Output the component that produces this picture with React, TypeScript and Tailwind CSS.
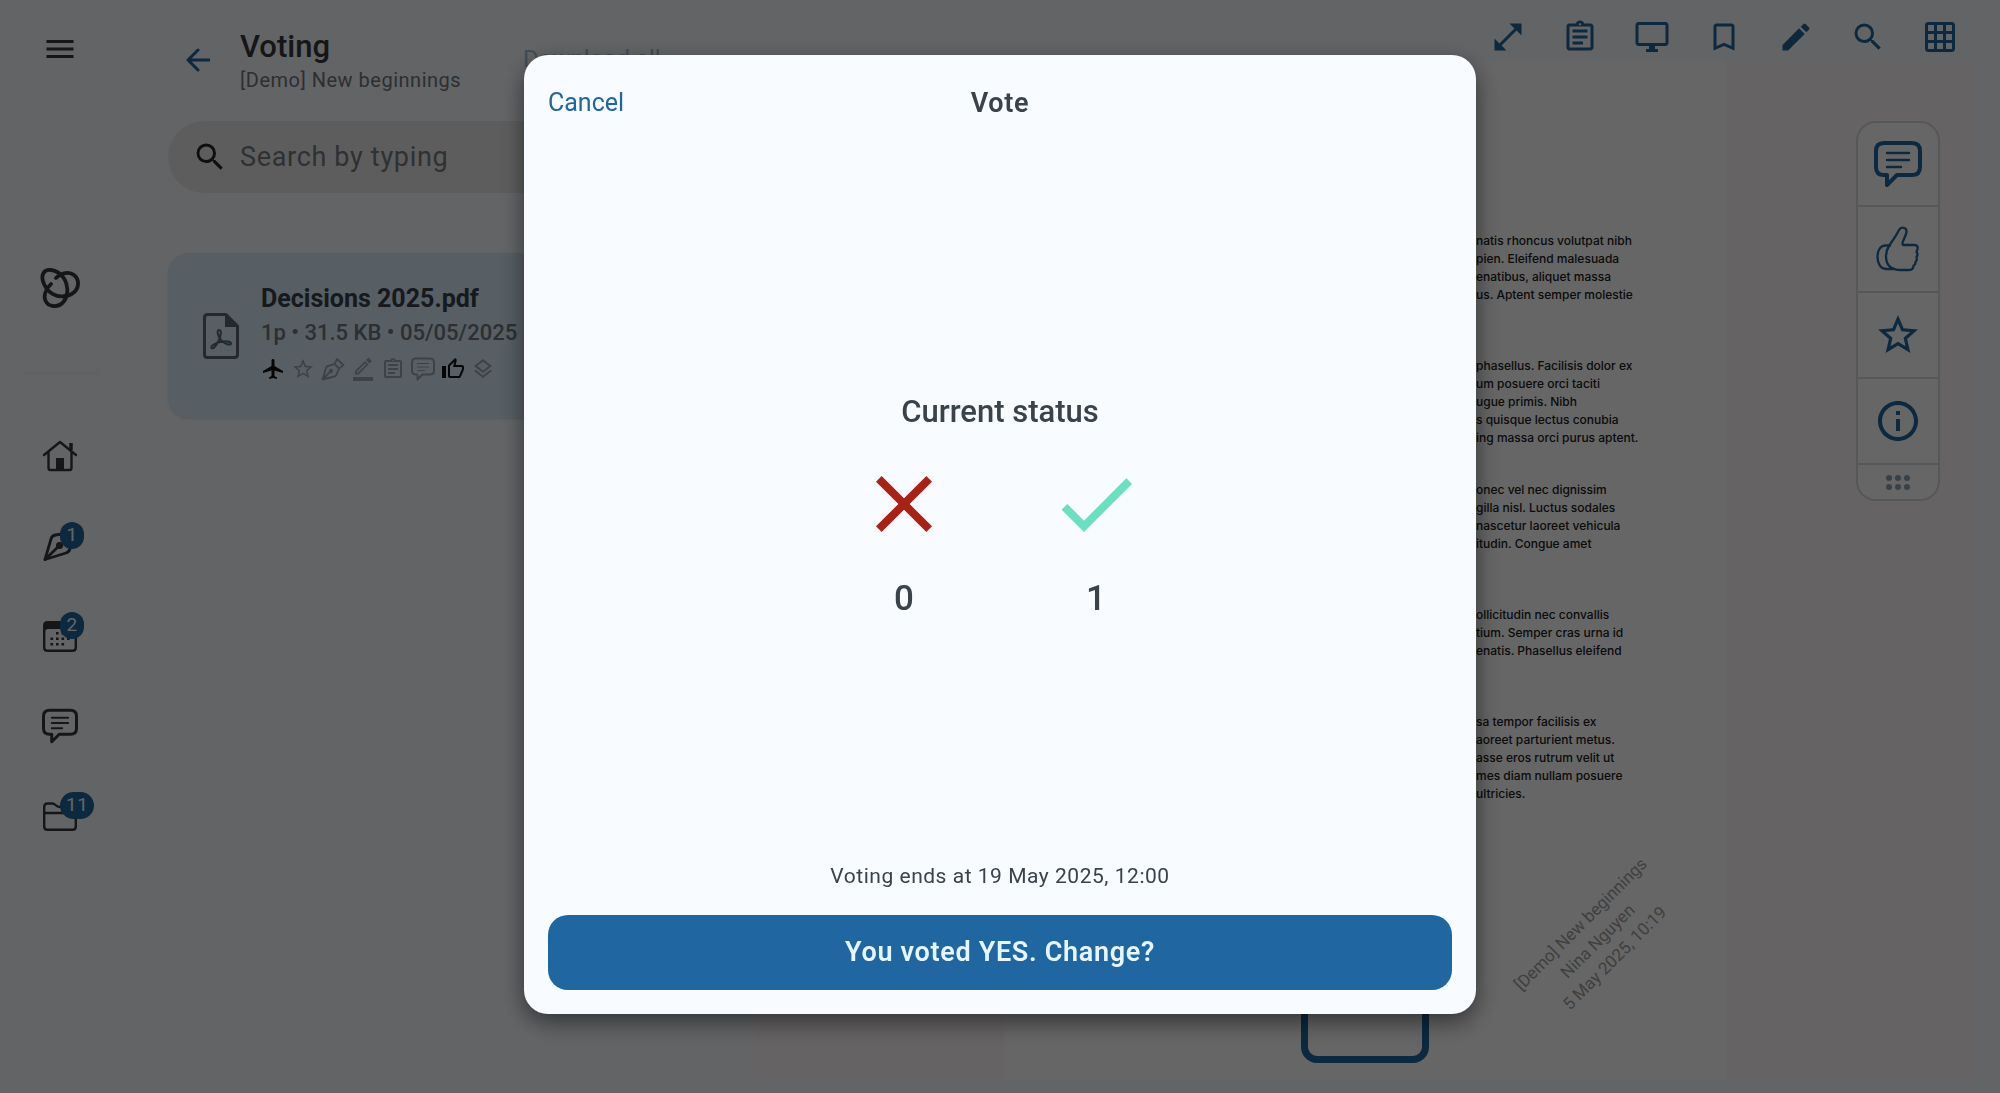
import type { ReactNode } from "react";
import {
  MdBookmarkBorder,
  MdCheck,
  MdClose,
  MdEdit,
  MdGridOn,
  MdInfoOutline,
  MdLocalAirport,
  MdMenu,
  MdOpenInFull,
  MdOutlineAssignment,
  MdOutlineDesktopWindows,
  MdOutlineLayers,
  MdOutlineThumbUp,
  MdSearch,
  MdStarBorder,
} from "react-icons/md";

function KnotLogo() {
  return (
    <svg width="40" height="40" viewBox="0 0 40 40" fill="none" stroke="currentColor" strokeWidth="3.8" strokeLinecap="round">
      <path d="M25 28C17 30 8 25 4 16C0 7 4 1 11 2C19 3 26 10 27 19C29 30 22 39 13 38C5 37 3 29 6 23C7 20 9 18 11 16" />
      <path d="M16 10C21 5 29 3 34 7C40 12 39 21 33 25C30 27.500 27.500 28 25 28" />
    </svg>
  );
}

function HomeIcon() {
  return (
    <svg width="36" height="32" viewBox="0 0 36 32" fill="none" stroke="currentColor" strokeWidth="2.400" strokeLinecap="round" strokeLinejoin="round">
      <path d="M2 15L18 2L34 15M6.500 12V28Q6.500 30 8.500 30H27.500Q29.500 30 29.500 28V12" />
      <path d="M29 10V3" strokeWidth="3.500" strokeLinecap="butt" />
      <path d="M14 18H22V30H14Z" fill="currentColor" stroke="none" />
    </svg>
  );
}

function NibIcon() {
  return (
    <svg width="36" height="36" viewBox="0 0 36 36" fill="none" stroke="currentColor" strokeWidth="2.800" strokeLinejoin="round" strokeLinecap="round">
      <path d="M3 31.500L9 11Q10 7.500 13.500 7L20 6L29 15L28 20.500Q27.500 24 24 25Z" />
      <path d="M3 31.500L17 18" />
      <circle cx="17.500" cy="17.500" r="2.200" fill="currentColor" />
    </svg>
  );
}

function PenIcon() {
  return (
    <svg width="24" height="24" viewBox="0 0 24 24" fill="none" stroke="currentColor" strokeWidth="1.900" strokeLinejoin="round">
      <path d="M1.500 22.500L5 11Q5.500 9.500 7 9L13.500 7L18 11.500L15.500 17.500Q15 19 13.500 19.500ZM13.500 7L16 2L22.500 8L18 11.500M1.500 22.500L9.500 14.500" />
      <circle cx="10" cy="14" r="1.200" />
    </svg>
  );
}

function MarkupIcon() {
  return (
    <svg width="24" height="24" viewBox="0 0 24 24" fill="currentColor">
      <path d="M2 20H22V24H2ZM4 17.500V14L14 4L17.500 7.500L7.500 17.500ZM5.700 14.700V15.800H6.800L15.100 7.500L14 6.400ZM15 3L16.800 1.200Q17.500 .5 18.200 1.200L20.300 3.300Q21 4 20.300 4.700L18.500 6.500Z" fillRule="evenodd" />
    </svg>
  );
}

function CalendarIcon() {
  return (
    <svg width="34" height="31" viewBox="0 0 34 31" fill="currentColor">
      <path fillRule="evenodd" d="M4.500 0H29.500Q34 0 34 4.500V26.500Q34 31 29.500 31H4.500Q0 31 0 26.500V4.500Q0 0 4.500 0ZM5 8Q2.400 8 2.400 10.500V26Q2.400 28.600 5 28.600H29Q31.600 28.600 31.600 26V10.500Q31.600 8 29 8Z" />
      <path d="M13 11h2.600v2.600H13zM18.500 11h2.600v2.600h-2.600zM24 11h2.600v2.600H24zM7.500 16.500h2.600v2.600H7.500zM13 16.500h2.600v2.600H13zM18.500 16.500h2.600v2.600h-2.600zM24 16.500h2.600v2.600H24zM7.500 22h2.600v2.600H7.500zM13 22h2.600v2.600H13zM18.500 22h2.600v2.600h-2.600z" />
    </svg>
  );
}

function CommentIcon({ size = 36 }: { size?: number }) {
  return (
    <svg width={size} height={size} viewBox="0 0 48 48" fill="none" stroke="currentColor" strokeLinejoin="round">
      <path strokeWidth="4" d="M10 3H38Q46 3 46 11V27Q46 35 38 35H23L13 45V35H10Q2 35 2 27V11Q2 3 10 3Z" />
      <path strokeWidth="2.400" strokeLinecap="round" d="M13 13H35M13 20H35M13 27H27" />
    </svg>
  );
}

function FolderIcon() {
  return (
    <svg width="34" height="29" viewBox="0 0 34 29" fill="none" stroke="currentColor" strokeWidth="2.400">
      <path d="M1.200 5Q1.200 1.500 4.500 1.500H9Q11 1.500 12.500 3Q14.500 5 17 5H29.500Q32.800 5 32.800 8V24.500Q32.800 27.800 29.500 27.800H4.500Q1.200 27.800 1.200 24.500ZM1.200 11H32.800" />
    </svg>
  );
}

function ThumbIcon() {
  return (
    <svg width="44" height="46" viewBox="0 0 44 46" fill="none" stroke="currentColor" strokeWidth="2.300" strokeLinejoin="round" strokeLinecap="round">
      <path d="M13 20C17 14 20 10 23 4C25 .5 31 1 30.500 6C30 10 27 14 26.500 17Q26 19 28 19H38Q42.500 19 41.500 23L40.500 26Q42.500 28 40.500 31Q41.500 34 39.500 36Q39.500 39 37.500 39.500Q37.500 44 33 44H25C13 44 10 37 10 30C10 26 11 23 13 20Z" />
      <path d="M14 19.500H9C4 20 1.500 25 1.500 31C1.500 38 5 43 10 43H17" />
    </svg>
  );
}

function PdfIcon() {
  return (
    <svg width="36" height="46" viewBox="0 0 36 46" fill="none" stroke="currentColor" strokeLinejoin="round">
      <path strokeWidth="3" d="M4.500 1.500H23L34.500 13V41.500Q34.500 44.500 31.500 44.500H4.500Q1.500 44.500 1.500 41.500V4.500Q1.500 1.500 4.500 1.500Z" />
      <path d="M22 1V14H35Z" fill="currentColor" stroke="none" />
      <path strokeWidth="2" d="M16 17C19 17 18 23 15.500 28C13 33 10 36.500 8.500 35C7 33.500 12 30 17 29C22 28 28 28 28 30.500C28 33 22 31 18.500 27.500C14.500 23.500 13.500 17 16 17Z" />
    </svg>
  );
}

function NavItem({ label, badge, children }: { label: string; badge?: string; children: ReactNode }) {
  return (
    <li className="flex h-[90px] items-center justify-center">
      <button aria-label={label} className="relative flex size-9 items-center justify-center">
        {children}
        {badge && (
          <span className="absolute -top-1.5 left-[18px] flex h-[27px] min-w-6 items-center justify-center rounded-full bg-[#2066a0] px-1.5 text-[19px] tracking-wide text-[#f8fbff]">
            {badge}
          </span>
        )}
      </button>
    </li>
  );
}

const toolbar = [
  { label: "Full screen", icon: <MdOpenInFull size={36} /> },
  { label: "Notes", icon: <MdOutlineAssignment size={36} /> },
  { label: "Present", icon: <MdOutlineDesktopWindows size={36} /> },
  { label: "Bookmark", icon: <MdBookmarkBorder size={36} /> },
  { label: "Edit", icon: <MdEdit size={36} /> },
  { label: "Search", icon: <MdSearch size={36} /> },
  { label: "Grid", icon: <MdGridOn size={36} /> },
];

const tools = [
  { label: "Comment", icon: <CommentIcon size={48} /> },
  { label: "Vote", icon: <ThumbIcon /> },
  { label: "Favourite", icon: <MdStarBorder size={48} /> },
  { label: "Info", icon: <MdInfoOutline size={48} /> },
];

const paragraphs = [
  {
    space: "mt-[171px]",
    lines: ["natis rhoncus volutpat nibh", "pien. Eleifend malesuada", "enatibus, aliquet massa", "us. Aptent semper molestie"],
  },
  {
    space: "mt-[53px]",
    lines: ["phasellus. Facilisis dolor ex", "um posuere orci taciti", "ugue primis. Nibh", "s quisque lectus conubia", "ing massa orci purus aptent."],
  },
  {
    space: "mt-[34px]",
    lines: ["onec vel nec dignissim", "gilla nisl. Luctus sodales", "nascetur laoreet vehicula", "itudin. Congue amet"],
  },
  {
    space: "mt-[53px]",
    lines: ["ollicitudin nec convallis", "tium. Semper cras urna id", "enatis. Phasellus eleifend"],
  },
  {
    space: "mt-[53px]",
    lines: ["sa tempor facilisis ex", "aoreet parturient metus.", "asse eros rutrum velit ut", "mes diam nullam posuere", "ultricies."],
  },
];

function Sidebar() {
  return (
    <nav className="flex w-[120px] shrink-0 flex-col items-center text-[#38383c]">
      <button aria-label="Menu" className="mt-[31px]">
        <MdMenu size={36} />
      </button>
      <div className="mt-[201px]">
        <KnotLogo />
      </div>
      <hr className="mt-16 mb-9 h-[3px] w-[75px] rounded-full border-0 bg-[#f0f2fa]" />
      <ul>
        <NavItem label="Home"><HomeIcon /></NavItem>
        <NavItem label="Signing" badge="1"><NibIcon /></NavItem>
        <NavItem label="Calendar" badge="2"><CalendarIcon /></NavItem>
        <NavItem label="Messages"><CommentIcon /></NavItem>
        <NavItem label="Files" badge="11"><FolderIcon /></NavItem>
      </ul>
    </nav>
  );
}

function DocumentList() {
  return (
    <section className="w-[634px] shrink-0 px-12">
      <header className="flex h-[121px] items-start pt-[27px]">
        <button aria-label="Back" className="mt-[21px] ml-[18px] text-[#2066a0]">
          <svg width="24" height="24" viewBox="0 0 24 24" fill="none" stroke="currentColor" strokeWidth="3" strokeLinecap="round" strokeLinejoin="round">
            <path d="M23 12H2M12 2L2 12L12 22" />
          </svg>
        </button>
        <div className="ml-[30px]">
          <h1 className="text-[31px] leading-10 font-medium text-[#38383c]">Voting</h1>
          <p className="text-[20px] leading-[26px] tracking-wide text-[#70767c]">[Demo] New beginnings</p>
        </div>
        <button className="mt-4 ml-[62px] text-[24px] leading-8 text-[#2066a0] opacity-40">Download all</button>
      </header>
      <label className="flex h-[72px] items-center gap-3 rounded-full bg-[#e9e9ec] pl-6">
        <MdSearch size={36} className="text-[#26262a]" />
        <input
          type="search"
          placeholder="Search by typing"
          className="min-w-0 flex-1 bg-transparent text-[27px] tracking-wide outline-none placeholder:text-[#767a80]"
        />
      </label>
      <article className="mt-[60px] flex h-[165px] items-center rounded-[20px] bg-[#d9ebfa] pl-[35px] shadow-sm">
        <div className="text-[#5e6870]">
          <PdfIcon />
        </div>
        <div className="ml-[22px] pb-2">
          <h2 className="text-[25px] leading-8 font-bold text-[#38404a]">Decisions 2025.pdf</h2>
          <p className="mt-0.5 text-[22px] leading-8 font-medium text-[#70787f]">1p • 31.5 KB • 05/05/2025</p>
          <div className="mt-2 flex gap-1.5 text-[#9aa5af]">
            <MdLocalAirport size={24} className="text-[#101012]" />
            <MdStarBorder size={24} />
            <PenIcon />
            <MarkupIcon />
            <MdOutlineAssignment size={24} />
            <CommentIcon size={24} />
            <MdOutlineThumbUp size={24} className="text-[#101012]" />
            <MdOutlineLayers size={24} />
          </div>
        </div>
      </article>
    </section>
  );
}

function Viewer() {
  return (
    <section className="flex min-w-0 flex-1 flex-col pr-6">
      <header className="flex h-[61px] items-center justify-end pt-3 text-[#2066a0]">
        {toolbar.map((item) => (
          <button key={item.label} aria-label={item.label} className="flex w-[72px] justify-center">
            {item.icon}
          </button>
        ))}
      </header>
      <div className="relative mb-[13px] flex flex-1 justify-center rounded-tr-lg bg-[#fdf7f8]">
        <article className="relative flex w-[722px] flex-col bg-white">
          {paragraphs.map((paragraph) => (
            <div key={paragraph.lines[0]} className={paragraph.space}>
              {paragraph.lines.map((line) => (
                <p key={line} className="pl-[472px] font-[Inter,sans-serif] text-[12px] leading-[18px] font-medium whitespace-nowrap text-[#202020]">
                  {line}
                </p>
              ))}
            </div>
          ))}
          <div className="mx-auto mt-auto mb-[17px] size-32 rounded-2xl border-[7px] border-[#2066a0]" />
          <p className="absolute right-[39px] bottom-[103px] -rotate-45 text-center text-[17px] leading-6 text-[#a0a0a0]">
            [Demo] New beginnings
            <br />
            Nina Nguyen
            <br />5 May 2025, 10:19
          </p>
        </article>
        {/* floating tools over the page */}
        <div className="absolute top-[60px] right-9 w-[84px] divide-y-2 divide-[#d6d9dc] overflow-hidden rounded-[20px] border-2 border-[#d6d9dc] bg-white text-[#2066a0]">
          {tools.map((tool) => (
            <button key={tool.label} aria-label={tool.label} className="flex h-[86px] w-full items-center justify-center first:h-[84px]">
              {tool.icon}
            </button>
          ))}
          <button aria-label="Move tools" className="flex h-[34px] w-full items-center justify-center text-[#8fa2b4]">
            <svg width="24" height="15" viewBox="0 0 24 15" fill="currentColor">
              {[3, 12, 21].map((x) => (
                <g key={x}>
                  <circle cx={x} cy="3" r="3" />
                  <circle cx={x} cy="12" r="3" />
                </g>
              ))}
            </svg>
          </button>
        </div>
      </div>
    </section>
  );
}

function VoteDialog() {
  return (
    <div className="fixed inset-0 flex justify-center bg-black/60 pt-[55px] pb-[79px]">
      <div
        role="dialog"
        aria-modal="true"
        aria-labelledby="vote-title"
        className="flex w-full max-w-[952px] flex-col rounded-3xl bg-[#f8fbff] px-6 pb-6 text-[#3a424c] shadow-[0_8px_24px_rgba(0,0,0,0.5)]"
      >
        <header className="grid h-24 grid-cols-3 items-center">
          <button className="justify-self-start text-[25px] text-[#2066a0]">Cancel</button>
          <h2 id="vote-title" className="text-center text-[27px] font-semibold tracking-wide">Vote</h2>
        </header>
        <div className="flex flex-1 flex-col items-center justify-center">
          <h3 className="text-[31px] leading-10 font-medium">Current status</h3>
          <div className="mt-6 flex gap-24 text-[35px] leading-[42px] font-medium">
            <div className="flex flex-col items-center gap-[26px]">
              <MdClose size={96} className="text-[#a82315]" />
              <span>0</span>
            </div>
            <div className="flex flex-col items-center gap-[26px]">
              <MdCheck size={96} className="text-[#6bdfc1]" />
              <span>1</span>
            </div>
          </div>
        </div>
        <p className="text-center text-[21px] leading-[30px] tracking-wide">Voting ends at 19 May 2025, 12:00</p>
        <button className="mt-6 h-[75px] shrink-0 rounded-[20px] bg-[#2066a0] text-[27px] font-semibold tracking-wide text-[#e6f6ff]">
          You voted YES. Change?
        </button>
      </div>
    </div>
  );
}

export default function App() {
  return (
    <main className="flex min-h-screen bg-[#f8fbff] font-[Roboto,sans-serif]">
      <Sidebar />
      <DocumentList />
      <Viewer />
      <VoteDialog />
    </main>
  );
}
